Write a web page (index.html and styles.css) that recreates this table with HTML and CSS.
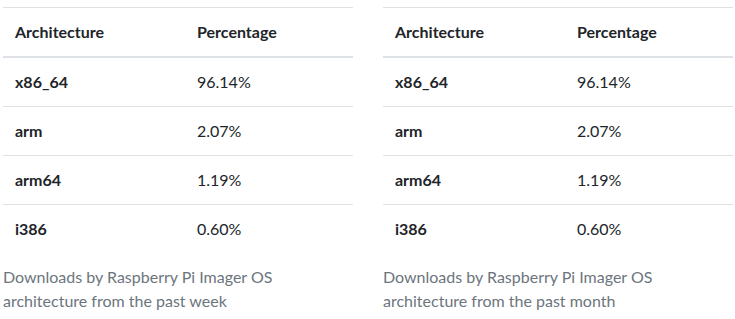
FILE: index.html
```html
<!DOCTYPE html>
<html lang="en">
<head>
<meta charset="utf-8">
<title>Architecture stats</title>
<link rel="stylesheet" href="styles.css">
</head>
<body>
<div class="row">
  <div class="col">
    <table class="table">
      <thead>
        <tr><th>Architecture</th><th>Percentage</th></tr>
      </thead>
      <tbody>
        <tr><th>x86_64</th><td>96.14%</td></tr>
        <tr><th>arm</th><td>2.07%</td></tr>
        <tr><th>arm64</th><td>1.19%</td></tr>
        <tr><th>i386</th><td>0.60%</td></tr>
      </tbody>
    </table>
    <p class="caption">Downloads by Raspberry Pi Imager OS architecture from the past week</p>
  </div>
  <div class="col">
    <table class="table">
      <thead>
        <tr><th>Architecture</th><th>Percentage</th></tr>
      </thead>
      <tbody>
        <tr><th>x86_64</th><td>96.14%</td></tr>
        <tr><th>arm</th><td>2.07%</td></tr>
        <tr><th>arm64</th><td>1.19%</td></tr>
        <tr><th>i386</th><td>0.60%</td></tr>
      </tbody>
    </table>
    <p class="caption">Downloads by Raspberry Pi Imager OS architecture from the past month</p>
  </div>
</div>
</body>
</html>
```
FILE: styles.css
```css
html, body {
  margin: 0;
  padding: 0;
  background: #fff;
}
body {
  font-family: "Lato", "Open Sans", sans-serif;
  font-size: 16px;
  line-height: 24px;
  color: #212529;
}
.row {
  display: grid;
  grid-template-columns: 350px 350px;
  column-gap: 30px;
  padding: 7px 0 0 3px;
}
.table {
  width: 100%;
  border-collapse: collapse;
  table-layout: fixed;
}
.table th, .table td {
  padding: 12px;
  text-align: left;
  vertical-align: top;
  border-top: 1px solid #dee2e6;
}
.table th { font-weight: 700; }
.table td { font-weight: 400; }
.table thead th {
  border-bottom: 2px solid #dee2e6;
}
.table thead th:first-child, .table tbody th { width: 158px; }
.table tbody tr:first-child th, .table tbody tr:first-child td { border-top: 0; }
.caption {
  margin: 0;
  padding: 12px 0;
  color: #6c757d;
}
```
